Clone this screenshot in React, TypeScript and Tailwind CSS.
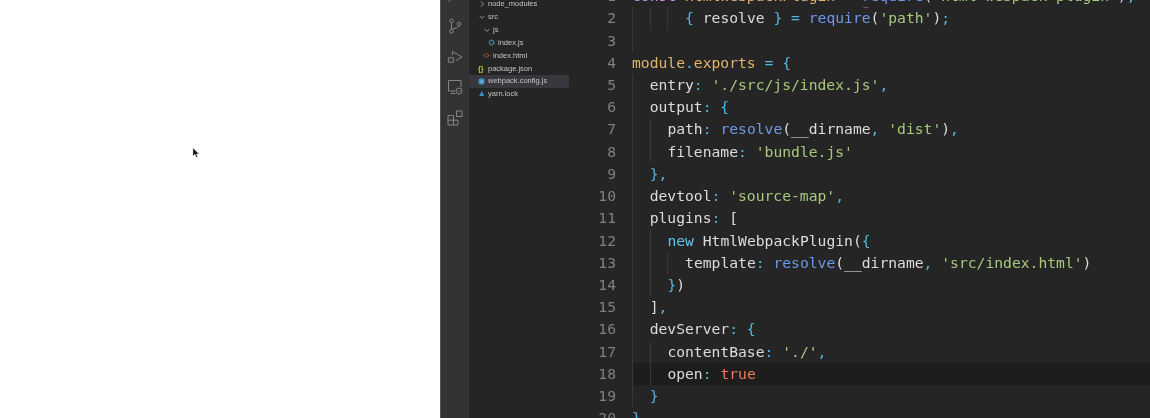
import React from "react";

const P = "text-[#52b6df]";
const K = "text-[#dcdcdc]";
const S = "text-[#a8c97c]";
const F = "text-[#6d9ae8]";
const O = "text-[#e2b56c]";
const R = "text-[#ee7b5c]";
const V = "text-[#c792ea]";
const N = "text-[#62c4ea]";

type Tok = [string, string];
const lines: { guides: number; toks: Tok[] }[] = [
  { guides: 0, toks: [["const ", V], ["HtmlWebpackPlugin", O], [" = ", P], ["require", F], ["(", K], ["'html-webpack-plugin'", S], [")", K], [",", P]] },
  { guides: 3, toks: [["{ ", P], ["resolve", K], [" } = ", P], ["require", F], ["(", K], ["'path'", S], [")", K], [";", P]] },
  { guides: 1, toks: [] },
  { guides: 0, toks: [["module", O], [".", P], ["exports", O], [" = {", P]] },
  { guides: 1, toks: [["entry", K], [": ", P], ["'./src/js/index.js'", S], [",", P]] },
  { guides: 1, toks: [["output", K], [": {", P]] },
  { guides: 2, toks: [["path", K], [": ", P], ["resolve", F], ["(__dirname", K], [", ", P], ["'dist'", S], [")", K], [",", P]] },
  { guides: 2, toks: [["filename", K], [": ", P], ["'bundle.js'", S]] },
  { guides: 1, toks: [["}", P], [",", P]] },
  { guides: 1, toks: [["devtool", K], [": ", P], ["'source-map'", S], [",", P]] },
  { guides: 1, toks: [["plugins", K], [": ", P], ["[", K]] },
  { guides: 2, toks: [["new ", N], ["HtmlWebpackPlugin", K], ["(", K], ["{", P]] },
  { guides: 3, toks: [["template", K], [": ", P], ["resolve", F], ["(__dirname", K], [", ", P], ["'src/index.html'", S], [")", K]] },
  { guides: 2, toks: [["}", P], [")", K]] },
  { guides: 1, toks: [["]", K], [",", P]] },
  { guides: 1, toks: [["devServer", K], [": {", P]] },
  { guides: 2, toks: [["contentBase", K], [": ", P], ["'./'", S], [",", P]] },
  { guides: 2, toks: [["open", K], [": ", P], ["true", R]] },
  { guides: 1, toks: [["}", P]] },
  { guides: 0, toks: [["}", P]] },
];

const Chevron = ({ down }: { down?: boolean }) => (
  <svg width="8" height="8" viewBox="0 0 8 8" fill="none" stroke="#b0b0b0" strokeWidth="0.8">
    {down ? <path d="M1.5 2.8 4 5.3l2.5-2.5" /> : <path d="M3 1.500 5.500 4 3 6.500" />}
  </svg>
);

const Tree = () => (
  <div className="w-[100px] shrink-0 bg-[#252526] -mt-[2.4px] text-[7.5px] text-[#c4c4c4] blur-[0.3px] [font-family:'Liberation_Sans',sans-serif]">
    <div className="flex h-[12.85px] items-center pl-[9px]">
      <span className="mr-[2px] w-[8px]"><Chevron /></span>node_modules
    </div>
    <div className="flex h-[12.85px] items-center pl-[9px]">
      <span className="mr-[2px] w-[8px]"><Chevron down /></span>src
    </div>
    <div className="flex h-[12.85px] items-center pl-[14px]">
      <span className="mr-[2px] w-[8px]"><Chevron down /></span>js
    </div>
    <div className="flex h-[12.85px] items-center pl-[19px]">
      <span className="mr-[2px] w-[8px]">
        <svg width="7" height="7" viewBox="0 0 7 7"><circle cx="3.5" cy="3.5" r="2.2" fill="none" stroke="#519aba" strokeWidth="1.4" strokeDasharray="1.2 0.5" /></svg>
      </span>index.js
    </div>
    <div className="flex h-[12.85px] items-center pl-[14px]">
      <span className="mr-[2px] w-[8px]">
        <svg width="7" height="7" viewBox="0 0 7 7" fill="none" stroke="#d9793b" strokeWidth="0.9"><path d="M3 1.500 1 3.500l2 2M4 1.500l2 2-2 2" /></svg>
      </span>index.html
    </div>
    <div className="flex h-[12.85px] items-center pl-[9px]">
      <span className="mr-[2px] w-[8px] text-[7px] leading-none font-bold text-[#cbcb41]">{"{}"}</span>package.json
    </div>
    <div className="flex h-[12.85px] items-center bg-[#37373d] pl-[9px]">
      <span className="mr-[2px] w-[8px]">
        <svg width="7" height="7" viewBox="0 0 7 7"><circle cx="3.5" cy="3.5" r="3.2" fill="#3d8fc4" /><circle cx="3.5" cy="3.5" r="1.2" fill="#7dbde6" /></svg>
      </span>webpack.config.js
    </div>
    <div className="flex h-[12.85px] items-center pl-[9px]">
      <span className="mr-[2px] w-[8px]">
        <svg width="7" height="7" viewBox="0 0 7 7"><path d="M3.800 0.800 6.200 6H1l1.200-2z" fill="#3a93c4" /></svg>
      </span>yarn.lock
    </div>
  </div>
);

const ActivityBar = () => (
  <div className="flex w-[28px] shrink-0 flex-col items-center gap-[14.4px] bg-[#333333] -mt-[12px] blur-[0.3px]">
    <svg width="16" height="16" viewBox="0 0 16 16" fill="none" stroke="#858585" strokeWidth="1"><circle cx="9.500" cy="6" r="4.500" /><path d="M6 9.500 1.500 14" /></svg>
    <svg width="16" height="16" viewBox="0 0 16 16" fill="none" stroke="#858585" strokeWidth="1">
      <circle cx="4.500" cy="2.800" r="1.800" /><circle cx="4.500" cy="13.200" r="1.800" /><circle cx="12" cy="6" r="1.800" />
      <path d="M4.500 4.600v6.800M12 7.800c0 2.600-5 2-7.500 3.600" />
    </svg>
    <svg width="16" height="16" viewBox="0 0 16 16" fill="none" stroke="#858585" strokeWidth="1">
      <path d="M5.500 2.500 15 8l-6 3.500M5.500 2.500V6" />
      <circle cx="4" cy="11" r="2.500" /><path d="M1 8.500l1.300 1M7 8.500 5.700 9.500M0.500 11H1.500M6.500 11h1M1 14l1.200-1.200M7 14l-1.200-1.200" />
    </svg>
    <svg width="16" height="16" viewBox="0 0 16 16" fill="none" stroke="#858585" strokeWidth="1">
      <path d="M8 12H1.500V1.500H14V8M4 14.500h4.500" />
      <circle cx="12" cy="12" r="3" /><path d="m10.700 12 1 1 1.600-1.800" strokeWidth="0.7" />
    </svg>
    <svg width="16" height="16" viewBox="0 0 16 16" fill="none" stroke="#858585" strokeWidth="1">
      <path d="M1 5.500h5.500V15H1zM1 10.200h10V15H6.500" />
      <rect x="9.500" y="1" width="5.500" height="5.500" />
    </svg>
  </div>
);

const Editor = () => (
  <div className="min-w-0 flex-1 overflow-hidden bg-[#252525] -mt-[14.9px] text-[14.68px] blur-[0.35px] [font-family:'DejaVu_Sans_Mono',monospace]">
    {lines.map((line, i) => (
      <div key={i} className="flex h-[22.23px] items-center leading-[22.23px] whitespace-pre">
        <span className="w-[47px] shrink-0 text-right text-[#808080]">{i + 1}</span>
        <div className={`ml-[16px] flex h-full flex-1 ${i === 17 ? "bg-[#1d1d1d]" : ""}`}>
          {Array.from({ length: line.guides }).map((_, g) => (
            <span key={g} className="h-full w-[17.7px] shrink-0 border-l border-[#383838]" />
          ))}
          <span>
            {line.toks.map(([text, color], t) => (
              <span key={t} className={color}>{text}</span>
            ))}
          </span>
        </div>
      </div>
    ))}
  </div>
);

export default function App() {
  return (
    <div className="flex h-[418px] w-[1150px] overflow-hidden bg-white">
      <div className="relative w-[440px] shrink-0 bg-white">
        <svg className="absolute left-[192px] top-[147px]" width="8" height="12" viewBox="0 0 8 12">
          <path d="M1 1v8l2-1.700 1.300 3 1.200-.5-1.200-2.900H7z" fill="#111" stroke="#ccc" strokeWidth="0.5" />
        </svg>
      </div>
      <div className="flex min-w-0 flex-1 overflow-hidden border-l border-[#555]">
        <ActivityBar />
        <Tree />
        <div className="relative flex min-w-0 flex-1">
          <Editor />
          <span className="absolute left-[294px] top-[2px] text-[7px] leading-none text-[#999]">…</span>
        </div>
      </div>
    </div>
  );
}
